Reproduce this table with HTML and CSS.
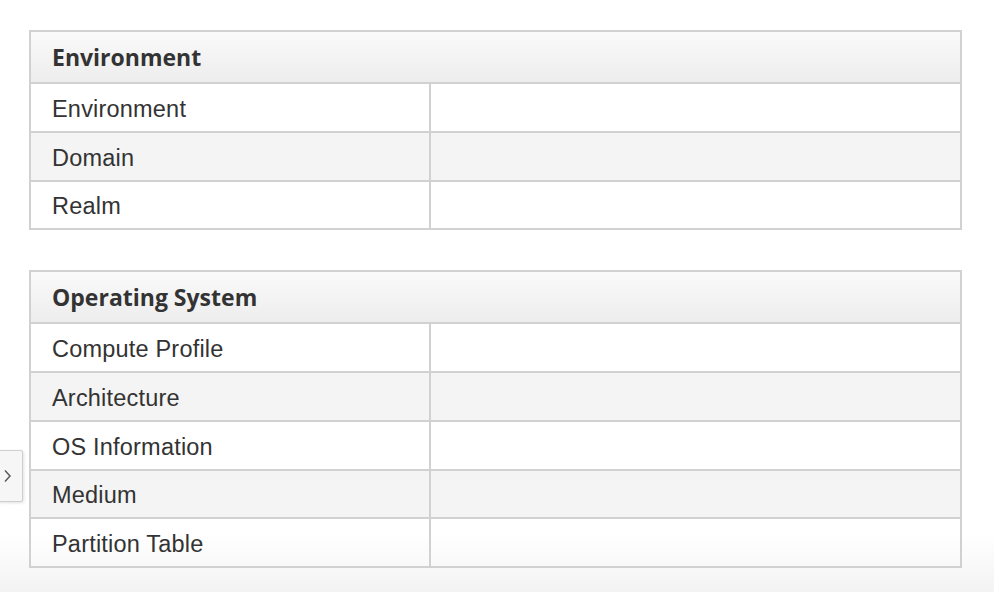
FILE: index.html
```html
<!DOCTYPE html>
<html>
<head>
<meta charset="utf-8">
<link rel="stylesheet" href="styles.css">
</head>
<body>
<div class="page">
  <table class="info">
    <thead><tr><th colspan="2">Environment</th></tr></thead>
    <tbody>
      <tr><td class="label">Environment</td><td></td></tr>
      <tr><td class="label">Domain</td><td></td></tr>
      <tr><td class="label">Realm</td><td></td></tr>
    </tbody>
  </table>
  <table class="info">
    <thead><tr><th colspan="2">Operating System</th></tr></thead>
    <tbody>
      <tr><td class="label">Compute Profile</td><td></td></tr>
      <tr><td class="label">Architecture</td><td></td></tr>
      <tr><td class="label">OS Information</td><td></td></tr>
      <tr><td class="label">Medium</td><td></td></tr>
      <tr><td class="label">Partition Table</td><td></td></tr>
    </tbody>
  </table>
</div>
<div class="toggle">
  <svg width="9" height="14" viewBox="0 0 9 14"><path d="M2 1.5 L7 7 L2 12.5" fill="none" stroke="#5a5a5a" stroke-width="1.5"/></svg>
</div>
</body>
</html>
```
FILE: styles.css
```css
html, body {
  margin: 0;
  padding: 0;
  height: 100%;
}
body {
  background: linear-gradient(to bottom, #ffffff 0, #ffffff 535px, #f3f3f3 592px);
  font-family: "Liberation Sans", Arial, sans-serif;
  color: #333;
  overflow: hidden;
}
.page {
  padding: 30px 32px 0 29px;
  display: flex;
  flex-direction: column;
  gap: 40px;
}
.info {
  border-collapse: collapse;
  width: 933px;
  border: 2px solid #d1d1d1;
}
.info th {
  text-align: left;
  font-family: "Open Sans", sans-serif;
  font-weight: 700;
  font-size: 23px;
  height: 50px;
  padding: 0 0 0 21px;
  background: linear-gradient(to bottom, #fafafa, #ededed);
  border-bottom: 2px solid #d1d1d1;
  color: #333;
}
.info td {
  height: 42.75px;
  padding: 4px 0 0 21px;
  font-size: 23.5px;
  letter-spacing: 0.2px;
  border: 2px solid #d1d1d1;
}
.info td.label {
  width: 377px;
}
.info tbody tr:nth-child(even) td {
  background: #f4f4f4;
}
.toggle {
  position: absolute;
  left: -2px;
  top: 450px;
  width: 25px;
  height: 52px;
  background: #f6f6f6;
  border: 1px solid #cfcfcf;
  border-radius: 0 2px 2px 0;
  box-shadow: 1px 1px 3px rgba(0,0,0,0.12);
  display: flex;
  align-items: center;
  justify-content: flex-start;
  box-sizing: border-box;
  padding-left: 4px;
}
```
